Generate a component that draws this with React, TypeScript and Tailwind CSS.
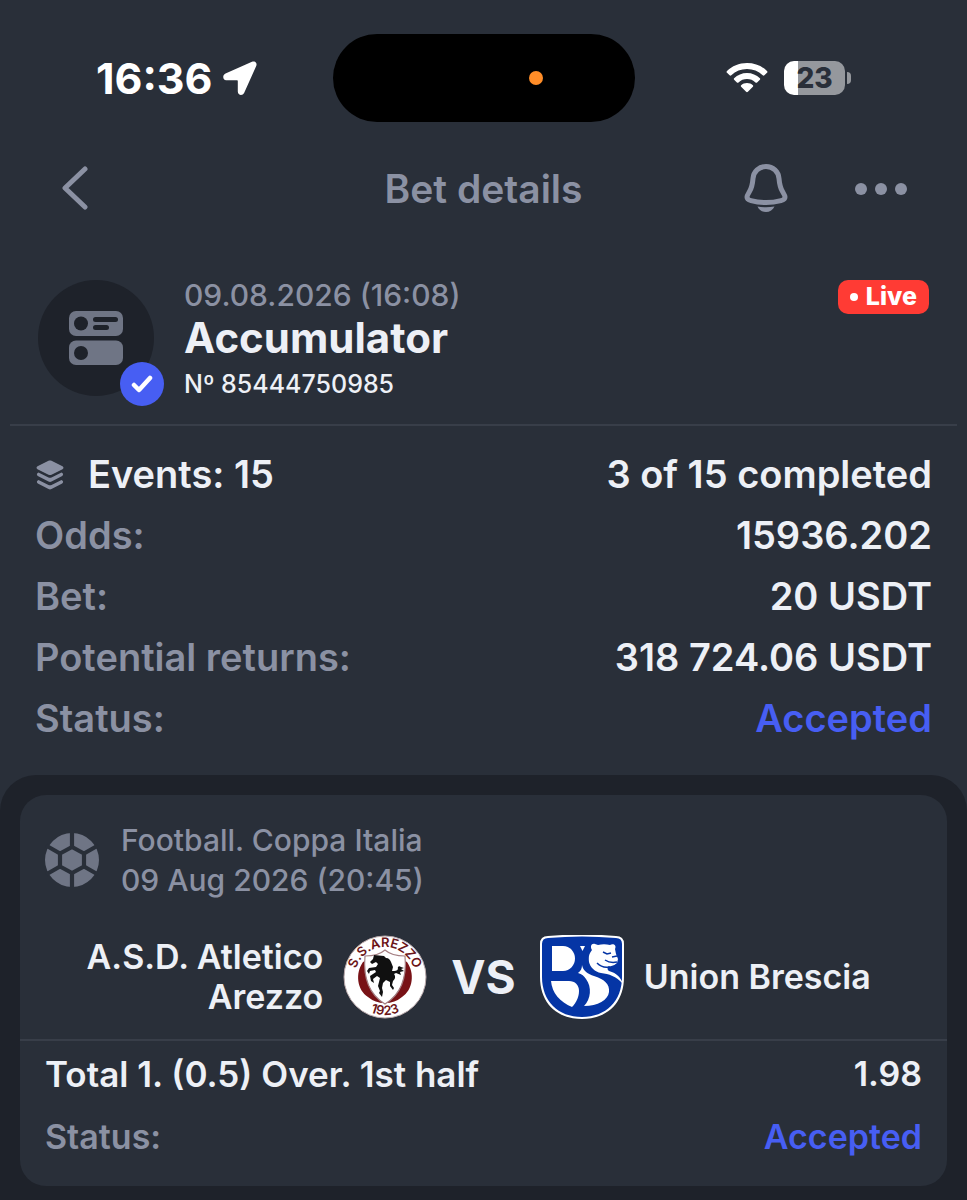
import type { ReactNode } from 'react';

const summary = [
  { label: 'Odds:', value: '15936.202' },
  { label: 'Bet:', value: '20 USDT' },
  { label: 'Potential returns:', value: '318 724.06 USDT' },
  { label: 'Status:', value: 'Accepted', accent: true },
];

function StatusBar() {
  return (
    <div className="grid grid-cols-[1fr_auto_1fr] items-center px-24 pt-[34px] text-white">
      <div className="flex items-center gap-2.5">
        <span className="text-[43px] leading-[48px] font-bold">16:36</span>
        <svg viewBox="0 0 34 34" className="size-[34px]" fill="currentColor">
          <path d="M29 .8 2.500 12.500C-.9 14-.3 19.300 3.200 19.300h10.600c.7 0 1 .3 1 1v10.200c0 4 4.800 4.600 6.300 1.500L33.200 5C34.500 2 32-.5 29 .8Z" />
        </svg>
      </div>
      {/* Dynamic island */}
      <div className="flex h-[88px] w-[302px] items-center justify-end rounded-full bg-black pr-[92px]">
        <span className="size-3.5 rounded-full bg-[#ff8d28]" />
      </div>
      <div className="flex items-center justify-end gap-4 pr-5">
        <svg viewBox="0 0 42 32" className="h-8 w-[42px]" fill="currentColor">
          <path d="M21 1C13 1 6 4 1 9c-.6.600-.6 1.200 0 1.800l2.600 2.500c.5.500 1.200.5 1.700 0C9.600 9.200 15 7 21 7s11.400 2.200 15.700 6.300c.5.500 1.200.5 1.700 0l2.600-2.500c.6-.6.6-1.200 0-1.800C36 4 29 1 21 1Z" />
          <path d="M21 11c-5 0-9.500 2-12.900 5.200-.5.600-.5 1.100 0 1.600l2.800 2.600c.5.500 1.100.5 1.600 0C14.800 18.200 17.800 17 21 17s6.200 1.200 8.500 3.400c.5.500 1.100.5 1.600 0l2.800-2.600c.5-.5.5-1 0-1.600C30.500 13 26 11 21 11Z" />
          <path d="M21 21c-2.300 0-4.400.9-5.900 2.300-.5.500-.5 1 0 1.500l5 5c.6.600 1.200.6 1.800 0l5-5c.5-.5.5-1 0-1.500C25.400 21.900 23.300 21 21 21Z" />
        </svg>
        <div className="flex items-center gap-0.5">
          <div className="flex h-[34px] w-[61px] items-center justify-center rounded-[10px] bg-linear-to-r from-white from-23% to-[#95989d] to-23% text-[28px] leading-none font-extrabold text-[#292f39]">
            23
          </div>
          <span className="h-3 w-1 rounded-r-full bg-[#95989d]" />
        </div>
      </div>
    </div>
  );
}

function NavBar() {
  return (
    <header className="grid grid-cols-[1fr_auto_1fr] items-center px-[60px] pt-9 text-[#8b91a3]">
      <div className="flex">
        <button type="button" aria-label="Back">
          <svg viewBox="0 0 32 46" className="h-[46px] w-8" fill="none" stroke="currentColor" strokeWidth="5" strokeLinecap="round" strokeLinejoin="round">
            <path d="M25 3 5 22l20 19" />
          </svg>
        </button>
      </div>
      <h1 className="text-[39px] leading-[62px] font-semibold">Bet details</h1>
      <div className="flex items-center justify-end gap-[66px]">
        <button type="button" aria-label="Notifications">
          <svg viewBox="0 0 46 52" className="h-[52px] w-[46px]">
            <path d="M23 3.500c-7 0-12.500 5-13 12-.5 6-1 9-3.500 13-1.500 2.500-2.500 4-2.500 5.500 0 2 1.500 3 4 3.600 9 2.400 21 2.400 30 0 2.500-.6 4-1.600 4-3.600 0-1.500-1-3-2.500-5.500-2.500-4-3-7-3.500-13-.5-7-6-12-13-12Z" fill="none" stroke="currentColor" strokeWidth="5" />
            <path d="M14.500 43.500q8.500 1.500 17 0c-1.500 3.500-4.700 5.500-8.500 5.500s-7-2-8.500-5.500Z" fill="currentColor" />
          </svg>
        </button>
        <button type="button" aria-label="More" className="flex gap-2">
          <span className="size-3 rounded-full bg-current" />
          <span className="size-3 rounded-full bg-current" />
          <span className="size-3 rounded-full bg-current" />
        </button>
      </div>
    </header>
  );
}

function BetHeader() {
  return (
    <section className="mx-2.5 flex border-b-2 border-[#383e49] pt-[60px] pr-7 pb-[22px] pl-7">
      <div className="relative mr-[30px] flex size-[116px] items-center justify-center rounded-full bg-[#1e222a]">
        <svg viewBox="0 0 54 54" className="size-[54px]">
          <rect width="54" height="25" rx="7" fill="#6f7585" />
          <rect y="29.500" width="54" height="24.500" rx="7" fill="#6f7585" />
          <circle cx="12" cy="12.500" r="7" fill="#1e222a" />
          <circle cx="12" cy="42" r="7" fill="#1e222a" />
          <path d="M26.500 8.500h20M26.500 16.500h11" stroke="#1e222a" strokeWidth="5" strokeLinecap="round" />
        </svg>
        <span className="absolute -right-2.5 -bottom-2.5 flex size-11 items-center justify-center rounded-full bg-[#475ef3]">
          <svg viewBox="0 0 22 18" className="h-[18px] w-[22px]" fill="none" stroke="#fff" strokeWidth="4.500" strokeLinecap="round" strokeLinejoin="round">
            <path d="m3 10 5 5L19 3" />
          </svg>
        </span>
      </div>
      <div className="flex-1">
        <p className="text-[30px] leading-[30px] font-medium text-[#8b91a3]">09.08.2026 (16:08)</p>
        <h2 className="text-[42px] leading-[56px] font-bold">Accumulator</h2>
        <p className="text-[25px] leading-[36px] font-medium">Nº 85444750985</p>
      </div>
      <div className="flex h-[34px] items-center gap-2 self-start rounded-[10px] bg-[#ff3b34] px-3 text-[25px] font-extrabold text-white">
        <span className="size-2 rounded-full bg-white" />
        Live
      </div>
    </section>
  );
}

type RowProps = { label: ReactNode; value: string; accent?: boolean };

function Row({ label, value, accent }: RowProps) {
  return (
    <div className="flex justify-between font-semibold">
      <dt className="text-[#8b91a3]">{label}</dt>
      <dd className={accent ? 'text-[#475ef3]' : ''}>{value}</dd>
    </div>
  );
}

function Summary() {
  return (
    <dl className="px-[35px] pt-[18px] pb-[26px] text-[38px] leading-[61px]">
      <Row
        label={
          <span className="flex items-center gap-[23px] text-[#edf0f6]">
            <svg viewBox="0 0 28 30" className="size-[30px]" fill="#8b91a3">
              <path d="M12.500.8 1.500 6.200C.2 7 .2 8.400 1.500 9.200l11 5.500c1 .4 2 .4 3 0l11-5.500c1.300-.8 1.300-2.200 0-3L15.500.8c-1-.4-2-.4-3 0Z" />
              <path d="M2.500 12.500 12.500 17.500c1 .4 2 .4 3 0l10-5c1.800.6 2.200 2.400.7 3.400l-10.700 5.700c-1 .4-2 .4-3 0L1.800 15.900c-1.500-1-1.100-2.800.7-3.400Z" />
              <path d="M2.500 20 12.500 25c1 .4 2 .4 3 0l10-5c1.800.6 2.200 2.400.7 3.400L15.500 29.100c-1 .4-2 .4-3 0L1.800 23.400c-1.500-1-1.100-2.800.7-3.400Z" />
            </svg>
            Events: 15
          </span>
        }
        value="3 of 15 completed"
      />
      {summary.map((row) => (
        <Row key={row.label} {...row} />
      ))}
    </dl>
  );
}

function FootballIcon() {
  return (
    <svg viewBox="-27 -27 54 54" className="size-[54px]">
      <circle r="27" fill="#6f7585" />
      <g fill="none" stroke="#292f39" strokeWidth="4.200" strokeLinejoin="round">
        <path d="M0-13 12-6.500V6.500L0 13-12 6.500V-6.500Z" />
        <path d="M0-28V-13M0 28V13M12-6.500 26-14.500M12 6.500 26 14.500M-12-6.500-26-14.500M-12 6.500-26 14.500" />
      </g>
    </svg>
  );
}

function ArezzoLogo() {
  return (
    <svg viewBox="0 0 84 84" className="size-[84px] shrink-0" role="img" aria-label="S.S. Arezzo">
      <defs>
        <path id="arezzo-top" d="M12 42a30 30 0 0 1 60 0" />
        <path id="arezzo-bottom" d="M3 41a39 39 0 0 0 78 0" />
      </defs>
      <circle cx="42" cy="42" r="41" fill="#fff" stroke="#b9a9ab" strokeWidth="1" />
      <path d="M20 27C12 38 14 55 25 62q7 6 17 6t17-6c11-7 13-24 5-35L42 16Z" fill="#781216" />
      <path d="M22 21c8 0 15-1.500 20-6 5 4.500 12 6 20 6 2 22-5 39-20 48C27 60 20 43 22 21Z" fill="#fff" stroke="#a58084" strokeWidth="1.200" />
      <path d="m41 21 2 2c3 0 4 2 5 4l2 5-1 4c3 0 5 0 6-2-1-2 1-4 3-2l3 1-3 1 3 2-4 1 1 3-5-2-2 1c2 3 1 5-1 7l-1 4 2 3-1 2-3-4v-4l-4-2-3 3-1 5 1 4-1 5-3-4 1-2-2-5 2-8-3-2-4 3 1 4-3-2-1-5 6-4-1-2-5 1-1 3-2-3 2-3 7-1 2-3-2-2-4 2-2-2 3-3 1-4Z" fill="#101010" />
      <g fill="#6b1518" className="font-[Inter,sans-serif] font-semibold" textAnchor="middle">
        <text fontSize="13"><textPath href="#arezzo-top" startOffset="50%">S.S.AREZZO</textPath></text>
        <text fontSize="13"><textPath href="#arezzo-bottom" startOffset="50%">1923</textPath></text>
      </g>
    </svg>
  );
}

function BresciaLogo() {
  return (
    <svg viewBox="0 0 84 84" className="size-[84px] shrink-0" role="img" aria-label="Union Brescia">
      <path d="M8 1Q42-2 76 1q8 0 8 8v33c0 26-17 42-42 42S0 68 0 42V9q0-8 8-8Z" fill="#fff" />
      <path d="M8 3Q42 0 76 3q6 0 6 6v33c0 24-16 40-40 40S2 66 2 42V9q0-6 6-6Z" fill="#0535a5" />
      <path d="M12 11h11c7 0 12 6 12 12.500S30 36 23 36H12Z" fill="#fff" />
      <path d="M11 46h18c6 0 10 4 10 10 0 6-3 12-7 16C20 67 12 58 11 46Z" fill="#fff" />
      <path d="M42 30c1 6 6 9 12 11 10 3 16 8 15 16-1 8-11 14-25 14 7-7 8-19 2-27-2-3-4-5-8-6 3-2 4-5 4-8Z" fill="#fff" />
      <path d="M40 11h5l-2.500 5Z" fill="#fff" />
      <path d="M52 15c-2-3-1-7 3-6l3 1q6-1.500 12 0c3-2 7 0 5 4l1 5 2 5-1 4q-4 4-8 3c-2 1-2 4 0 5 8 2 12 7 14 13-7-8-14-10-22-11-6-1-11-6-12-11-.5-6 0-8 3-12Z" fill="#fff" />
      <path d="m63 17 4 2 4-1M72 22l5-1M65 25c3 2 7 3 12 2M57 28c3 3 7 5 12 4" fill="none" stroke="#0535a5" strokeWidth="1.500" />
    </svg>
  );
}

function EventCard() {
  return (
    <article className="rounded-[26px] bg-[#292f39]">
      <div className="flex items-center gap-[22px] px-[25px] pt-[25px] text-[30px] leading-[40px] font-medium text-[#8b91a3]">
        <FootballIcon />
        <div>
          <p>Football. Coppa Italia</p>
          <p>09 Aug 2026 (20:45)</p>
        </div>
      </div>
      <div className="grid grid-cols-[1fr_auto_auto_auto_1fr] items-center gap-5 px-5 pt-[35px] pb-5 text-[34px] leading-[40px] font-semibold">
        <p className="text-right">A.S.D. Atletico Arezzo</p>
        <ArezzoLogo />
        <span className="px-1 text-[46px] font-bold">VS</span>
        <BresciaLogo />
        <p>Union Brescia</p>
      </div>
      <dl className="border-t-2 border-[#383e49] px-[25px] pt-0.5 pb-[18px] text-[34px] leading-[62px]">
        <Row label={<span className="text-[35px] text-[#edf0f6]">Total 1. (0.5) Over. 1st half</span>} value="1.98" />
        <Row label="Status:" value="Accepted" accent />
      </dl>
    </article>
  );
}

export default function App() {
  return (
    <main className="flex min-h-screen flex-col bg-[#292f39] font-[Inter,sans-serif] text-[#edf0f6]">
      <StatusBar />
      <NavBar />
      <BetHeader />
      <Summary />
      <section className="flex-1 rounded-t-[36px] bg-[#1e222a] px-5 pt-5 pb-3.5">
        <EventCard />
      </section>
    </main>
  );
}
